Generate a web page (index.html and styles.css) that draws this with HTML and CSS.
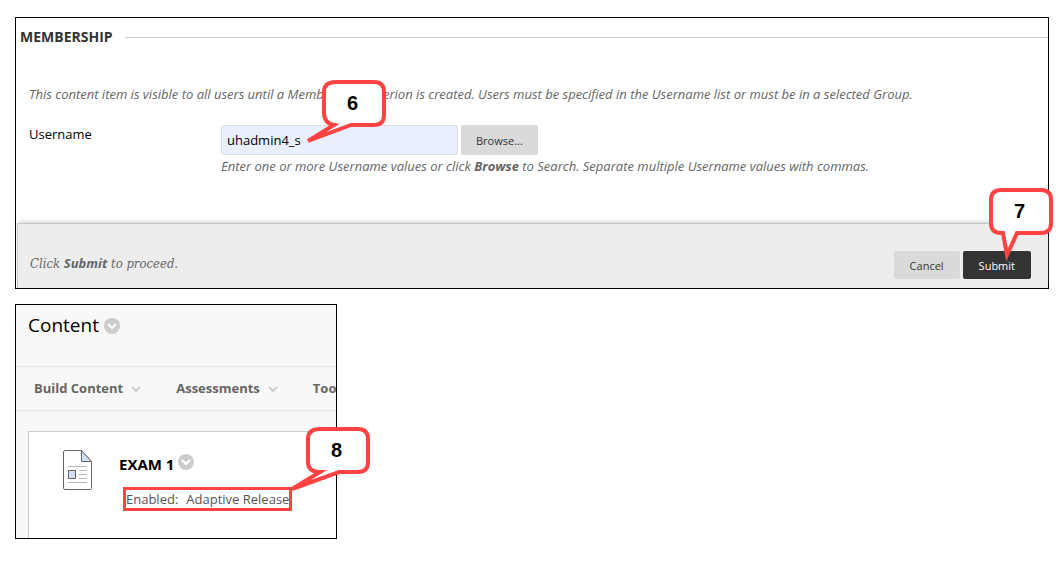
FILE: index.html
```html
<!DOCTYPE html>
<html lang="en">
<head>
    <meta charset="UTF-8">
    <meta name="viewport" content="width=device-width, initial-scale=1.0">
    <title>Adaptive Release - Membership</title>
    <link rel="stylesheet" href="styles.css">
</head>
<body>
    <form class="panel membership">
        <h2 class="section-title">MEMBERSHIP</h2>
        <div class="section-body">
            <p class="hint">This content item is visible to all users until a Membership Criterion is created. Users must be specified in the Username list or must be in a selected Group.</p>
            <div class="field">
                <label class="field-label" for="username">Username</label>
                <div class="field-value">
                    <div class="field-row">
                        <input class="text-input" type="text" id="username" value="uhadmin4_s">
                        <button class="btn" type="button">Browse...</button>
                    </div>
                    <p class="hint">Enter one or more Username values or click <strong>Browse</strong> to Search. Separate multiple Username values with commas.</p>
                </div>
            </div>
        </div>
        <div class="submit-bar">
            <p class="submit-note">Click <strong>Submit</strong> to proceed.</p>
            <div class="submit-buttons">
                <button class="btn btn-small" type="button">Cancel</button>
                <button class="btn btn-small btn-dark" type="submit">Submit</button>
            </div>
        </div>

        <div class="callout callout-6">
            <svg class="callout-shape" width="90" height="80">
                <path d="M30 2H68Q78 2 78 12V35Q78 45 68 45H45L2 61L28 45Q18 43 18 33V12Q18 2 30 2Z"/>
            </svg>
            <span class="callout-number">6</span>
        </div>
        <div class="callout callout-7">
            <svg class="callout-shape" width="90" height="80">
                <path d="M28 2H68Q78 2 78 12V35Q78 45 68 45H44L34 67L30 45H28Q18 45 18 35V12Q18 2 28 2Z"/>
            </svg>
            <span class="callout-number">7</span>
        </div>
    </form>

    <div class="panel content">
        <div class="content-clip">
            <div class="content-header">
                <h1 class="content-title">Content</h1>
                <button class="menu-btn" type="button" aria-label="Content options">
                    <svg width="16" height="16"><circle cx="8" cy="8" r="8"/><path d="M4 6L8 10L12 6"/></svg>
                </button>
            </div>
            <div class="action-bar">
                <button class="action" type="button">Build Content
                    <svg width="10" height="8"><path d="M1 2L5 6L9 2"/></svg>
                </button>
                <button class="action" type="button">Assessments
                    <svg width="10" height="8"><path d="M1 2L5 6L9 2"/></svg>
                </button>
                <button class="action" type="button">Tools
                    <svg width="10" height="8"><path d="M1 2L5 6L9 2"/></svg>
                </button>
            </div>
            <div class="item">
                <svg class="item-icon" width="30" height="41">
                    <path class="page" d="M2.500 .5H18.500L28.500 11.500V38.500Q28.500 39.500 27.500 39.500H2Q.5 39.500 .5 38V2Q.5 .5 2.500 .5Z"/>
                    <path class="fold" d="M18.500 .5V11.500H28.500Z"/>
                    <path class="lines" d="M5 16.500H24M16 20.500H24M16 24.500H24M16 28.500H24M5 32.500H24"/>
                    <rect class="thumb" x="5.500" y="20.500" width="7" height="8"/>
                </svg>
                <div class="item-text">
                    <div class="item-heading">
                        <h3 class="item-title">EXAM 1</h3>
                        <button class="menu-btn" type="button" aria-label="EXAM 1 options">
                            <svg width="16" height="16"><circle cx="8" cy="8" r="8"/><path d="M4 6L8 10L12 6"/></svg>
                        </button>
                    </div>
                    <div class="item-enabled"><span>Enabled:</span><span>Adaptive Release</span></div>
                </div>
            </div>
        </div>

        <div class="callout callout-8">
            <svg class="callout-shape" width="90" height="80">
                <path d="M30 2H68Q78 2 78 12V35Q78 45 68 45H49L2 62L30 45Q18 45 18 35V12Q18 2 30 2Z"/>
            </svg>
            <span class="callout-number">8</span>
        </div>
    </div>
</body>
</html>
```

FILE: styles.css
```css
* {
    box-sizing: border-box;
}

body {
    margin: 0;
    padding: 17px 11px 0 15px;
    font-family: "Open Sans", sans-serif;
    font-size: 13px;
    line-height: 18px;
    color: #000;
    background: #fff;
}

h1, h2, h3, p {
    margin: 0;
}

button, input {
    font-family: inherit;
    margin: 0;
}

.panel {
    position: relative;
    border: 1px solid #000;
}

.section-title {
    display: flex;
    align-items: center;
    gap: 12px;
    padding: 10px 0 0 4px;
    font-size: 14px;
    font-weight: bold;
    color: #333;
}

.section-title::after {
    content: "";
    flex: 1;
    border-top: 1px solid #ccc;
}

.section-body {
    padding: 39px 13px 48px;
}

.hint {
    font-style: italic;
    color: #666;
}

.field {
    display: flex;
    margin-top: 22px;
}

.field-label {
    width: 192px;
}

.field-row {
    display: flex;
    gap: 3px;
    margin-bottom: 2px;
}

.text-input {
    width: 237px;
    height: 30px;
    padding: 0 5px;
    border: 1px solid #ddd;
    border-radius: 3px;
    background: #e8f0fe;
    font-size: 13px;
    color: #000;
}

.btn {
    height: 30px;
    padding: 0 15px;
    border: 0;
    border-radius: 2px;
    background: #dadada;
    font-size: 11px;
    color: #333;
}

.btn-small {
    height: 28px;
    padding: 0 16px;
}

.btn-dark {
    background: #333;
    color: #fff;
}

.submit-bar {
    display: flex;
    justify-content: space-between;
    margin-left: 1px;
    padding: 27px 17px 9px 12px;
    border-top: 1px solid #c8c8c8;
    border-left: 1px solid #c8c8c8;
    background: #ededed;
    box-shadow: 0 -3px 4px -2px #ccc;
}

.submit-note {
    padding-top: 3px;
    font-family: "DejaVu Serif Condensed", "DejaVu Serif", serif;
    font-size: 13px;
    font-style: italic;
    color: #666;
}

.submit-note strong {
    font-family: "Open Sans", sans-serif;
}

.submit-buttons {
    display: flex;
    gap: 3px;
}

/* content area */
.content {
    width: 322px;
    margin-top: 15px;
    background: #f8f8f8;
}

.content-clip {
    overflow: hidden;
}

.content-header {
    display: flex;
    align-items: center;
    gap: 5px;
    padding: 8px 12px 28px;
}

.content-title {
    font-size: 19px;
    font-weight: normal;
    line-height: 25px;
}

.menu-btn {
    display: flex;
    padding: 0;
    border: 0;
    background: none;
}

.menu-btn circle {
    fill: #ccc;
}

.menu-btn path {
    fill: none;
    stroke: #fff;
    stroke-width: 2;
}

.action-bar {
    display: flex;
    gap: 35px;
    padding: 12px 18px;
    border-top: 1px solid #e6e6e6;
    border-bottom: 1px solid #e6e6e6;
}

.action {
    display: flex;
    flex-shrink: 0;
    align-items: center;
    gap: 8px;
    padding: 0;
    border: 0;
    background: none;
    font-size: 13px;
    font-weight: bold;
    line-height: 19px;
    color: #666;
}

.action path {
    fill: none;
    stroke: #ccc;
    stroke-width: 2;
}

.item {
    display: flex;
    gap: 26px;
    margin: 20px 0 0 12px;
    padding: 18px 0 27px 34px;
    border-top: 1px solid #ccc;
    border-left: 1px solid #ccc;
    background: #fff;
}

.item-icon {
    flex-shrink: 0;
}

.page {
    fill: #fff;
    stroke: #666;
}

.fold, .thumb {
    fill: #cfe0f5;
    stroke: #666;
}

.lines {
    fill: none;
    stroke: #bbb;
}

.item-text {
    padding-top: 4px;
}

.item-heading {
    display: flex;
    gap: 4px;
    margin-bottom: 13px;
}

.item-title {
    font-size: 15px;
    line-height: 20px;
}

.item-enabled {
    display: flex;
    gap: 8px;
    width: max-content;
    margin-left: 4px;
    border: 3px solid #ff4343;
    color: #555;
}

/* numbered callouts over the panels */
.callout {
    position: absolute;
    width: 90px;
    height: 80px;
    pointer-events: none;
}

.callout-shape {
    display: block;
}

.callout-shape path {
    fill: #fff;
    stroke: #ff4343;
    stroke-width: 4;
}

.callout-number {
    position: absolute;
    top: 12px;
    left: 18px;
    width: 57px;
    font-family: "Liberation Sans", sans-serif;
    font-size: 20px;
    font-weight: bold;
    line-height: 22px;
    text-align: center;
}

.callout-6 {
    top: 62px;
    left: 290px;
}

.callout-7 {
    top: 170px;
    right: -15px;
}

.callout-8 {
    top: 122px;
    left: 274px;
}
```
